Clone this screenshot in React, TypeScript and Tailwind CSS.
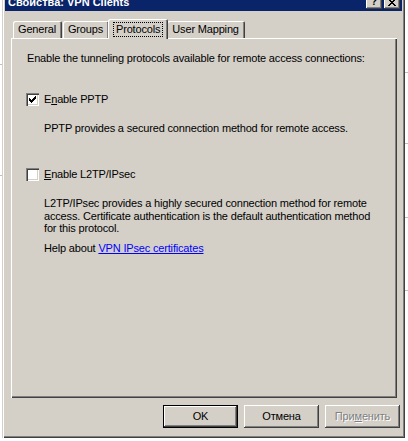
import React from "react";

const raised =
  "shadow-[inset_-1px_-1px_0_#404040,inset_1px_1px_0_#ffffff,inset_-2px_-2px_0_#808080]";

function CheckBox({ checked }: { checked?: boolean }) {
  return (
    <span className="flex h-[13px] w-[13px] shrink-0 items-center justify-center bg-white shadow-[inset_1px_1px_0_#808080,inset_2px_2px_0_#404040,inset_-1px_-1px_0_#ffffff,inset_-2px_-2px_0_#d4d0c8]">
      {checked ? (
        <svg width="7" height="7" viewBox="0 0 7 7" shapeRendering="crispEdges">
          <path
            d="M0 2h1v3h-1zM1 3h1v3h-1zM2 4h1v3h-1zM3 3h1v3h-1zM4 2h1v3h-1zM5 1h1v3h-1zM6 0h1v3h-1z"
            fill="#000"
          />
        </svg>
      ) : null}
    </span>
  );
}

function Button({
  children,
  isDefault,
  disabled,
}: {
  children: React.ReactNode;
  isDefault?: boolean;
  disabled?: boolean;
}) {
  return (
    <div
      className={`flex h-[23px] w-[75px] items-center justify-center bg-[#d4d0c8] ${
        isDefault
          ? "shadow-[inset_0_0_0_1px_#000000,inset_-2px_-2px_0_#404040,inset_2px_2px_0_#ffffff,inset_-3px_-3px_0_#808080]"
          : raised
      } ${disabled ? "text-[#808080] [text-shadow:1px_1px_0_#ffffff]" : "text-black"}`}
    >
      {children}
    </div>
  );
}

function Tab({ label, active }: { label: string; active?: boolean }) {
  if (active) {
    return (
      <div className="relative z-10 mx-[-2px] mb-[-1px] flex h-[20px] items-start rounded-t-[2px] bg-[#d4d0c8] px-[5px] pt-[3px] shadow-[inset_1px_1px_0_#ffffff,inset_-1px_0_0_#404040,inset_-2px_0_0_#808080]">
        <span className="border border-dotted border-black px-[2px] leading-[13px]">
          {label}
        </span>
      </div>
    );
  }
  return (
    <div className="flex h-[17px] items-start rounded-t-[2px] bg-[#d4d0c8] pl-[5px] pr-[6px] pt-[2px] leading-[13px] shadow-[inset_1px_1px_0_#ffffff,inset_-1px_0_0_#404040,inset_-2px_0_0_#808080]">
      {label}
    </div>
  );
}

export default function App() {
  return (
    <div className="flex h-[441px] w-[408px] overflow-hidden bg-white font-['Liberation_Sans',Arial,sans-serif] text-[11px] tracking-[-0.17px] text-black">
      <div className="flex w-[2px] flex-col">
        <div className="mt-[64px] h-px bg-[#c0c0c0]" />
        <div className="mt-[110px] h-px bg-[#c0c0c0]" />
      </div>
      <div className="mt-[-10px] flex h-[448px] w-[403px] shrink-0 flex-col bg-[#d4d0c8] p-[3px] shadow-[inset_1px_1px_0_#d4d0c8,inset_2px_2px_0_#ffffff,inset_-1px_-1px_0_#404040,inset_-2px_-2px_0_#808080]">
        {/* title bar */}
        <div className="flex h-[18px] items-center justify-between bg-[#0a246a] pl-[3px] pr-[2px]">
          <span className="font-bold text-white leading-[13px] tracking-normal">Свойства: VPN Clients</span>
          <div className="flex gap-[2px]">
            <div className={`flex h-[14px] w-[16px] items-center justify-center bg-[#d4d0c8] font-bold text-[10px] leading-none ${raised}`}>
              ?
            </div>
            <div className={`flex h-[14px] w-[16px] items-center justify-center bg-[#d4d0c8] ${raised}`}>
              <svg width="8" height="7" viewBox="0 0 8 7" shapeRendering="crispEdges">
                <path
                  d="M0 0h2v1h-2zM6 0h2v1h-2zM1 1h2v1h-2zM5 1h2v1h-2zM2 2h4v1h-4zM3 3h2v1h-2zM2 4h4v1h-4zM1 5h2v1h-2zM5 5h2v1h-2zM0 6h2v1h-2zM6 6h2v1h-2z"
                  fill="#000"
                />
              </svg>
            </div>
          </div>
        </div>

        {/* tabs */}
        <div className="ml-[6px] mt-[8px] flex items-end gap-[1px] pl-[2px]">
          <Tab label="General" />
          <Tab label="Groups" />
          <Tab label="Protocols" active />
          <Tab label="User Mapping" />
        </div>

        {/* panel */}
        <div className="ml-[6px] flex h-[360px] w-[386px] flex-col pl-[15px] pt-[14px] leading-[13px] shadow-[inset_1px_1px_0_#ffffff,inset_-1px_-1px_0_#404040,inset_-2px_-2px_0_#808080]">
          <p className="pl-px">
            Enable the tunneling protocols available for remote access connections:
          </p>

          <div className="mt-[28px] flex items-center gap-[5px]">
            <CheckBox checked />
            <span>
              E<span className="underline">n</span>able PPTP
            </span>
          </div>
          <p className="ml-[18px] mt-[16px]">
            PPTP provides a secured connection method for remote access.
          </p>

          <div className="mt-[33px] flex items-center gap-[5px]">
            <CheckBox />
            <span>
              <span className="underline">E</span>nable L2TP/IPsec
            </span>
          </div>
          <p className="ml-[18px] mt-[16px] leading-[12.5px]">
            L2TP/IPsec provides a highly secured connection method for remote
            <br />
            access. Certificate authentication is the default authentication method
            <br />
            for this protocol.
          </p>
          <p className="ml-[18px] mt-[7px]">
            Help about{" "}
            <span className="text-[#0000ff] underline">VPN IPsec certificates</span>
          </p>
        </div>

        {/* buttons */}
        <div className="mt-[7px] flex justify-end gap-[6px] pr-[2px]">
          <Button isDefault>OK</Button>
          <Button>Отмена</Button>
          <Button disabled>
            При<span className="underline">м</span>енить
          </Button>
        </div>
      </div>
      <div className="flex flex-1 flex-col">
        <div className="mt-[72px] h-px bg-[#c0c0c0]" />
        <div className="mt-[70px] h-px bg-[#c0c0c0]" />
        <div className="mt-[73px] h-px bg-[#c0c0c0]" />
        <div className="mt-[72px] h-px bg-[#c0c0c0]" />
      </div>
    </div>
  );
}
